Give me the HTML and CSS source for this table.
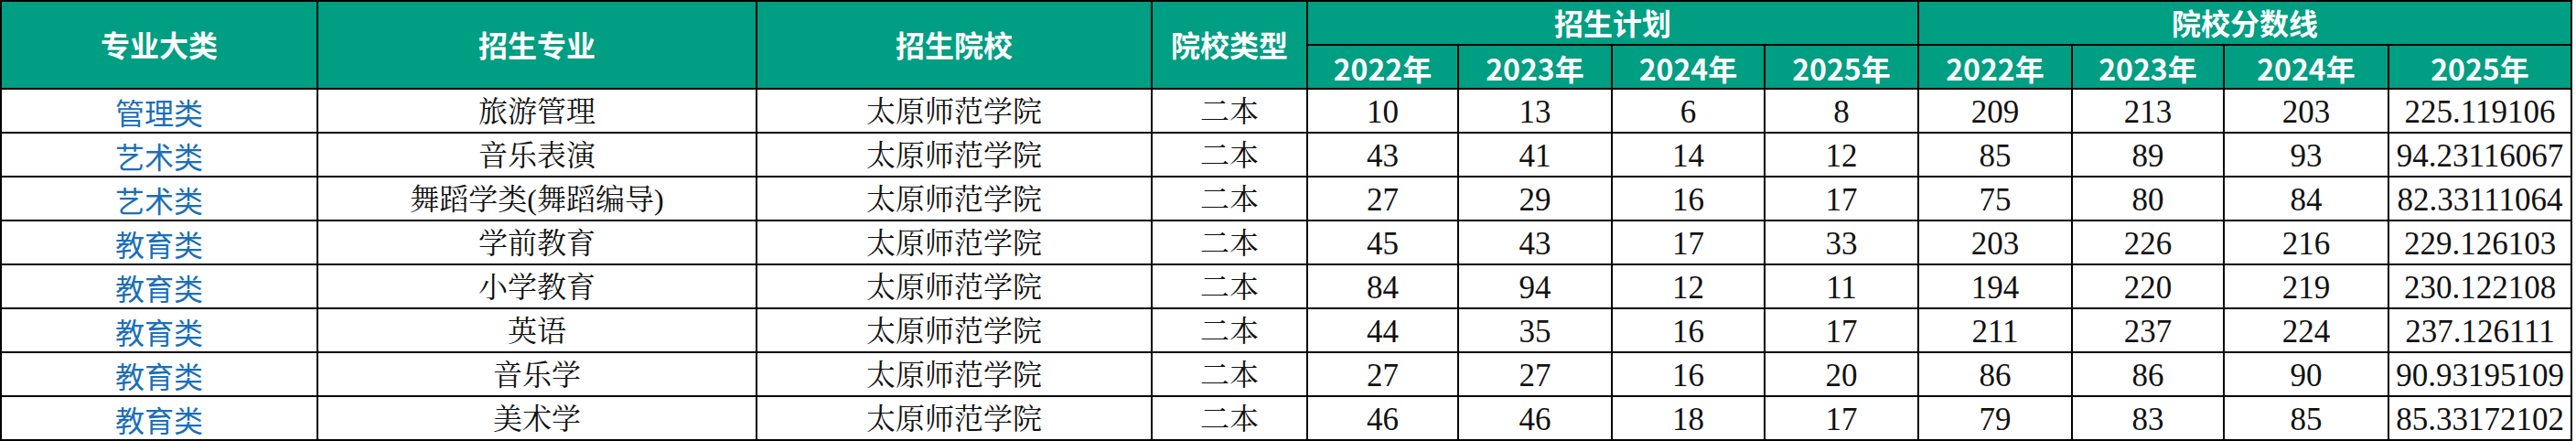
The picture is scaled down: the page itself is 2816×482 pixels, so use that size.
FILE: index.html
```html
<!DOCTYPE html>
<html lang="zh-CN">
<head>
<meta charset="utf-8">
<title>太原师范学院 招生计划与分数线</title>
<link rel="stylesheet" href="styles.css">
</head>
<body>
<div class="sheet">
  <div class="cell head tall">专业大类</div>
  <div class="cell head tall">招生专业</div>
  <div class="cell head tall">招生院校</div>
  <div class="cell head tall">院校类型</div>
  <div class="cell head group">招生计划</div>
  <div class="cell head group">院校分数线</div>
  <div class="cell head sub">2022年</div>
  <div class="cell head sub">2023年</div>
  <div class="cell head sub">2024年</div>
  <div class="cell head sub">2025年</div>
  <div class="cell head sub">2022年</div>
  <div class="cell head sub">2023年</div>
  <div class="cell head sub">2024年</div>
  <div class="cell head sub last">2025年</div>

  <div class="cell cat">管理类</div><div class="cell txt">旅游管理</div><div class="cell txt">太原师范学院</div><div class="cell txt">二本</div>
  <div class="cell num">10</div><div class="cell num">13</div><div class="cell num">6</div><div class="cell num">8</div>
  <div class="cell num">209</div><div class="cell num">213</div><div class="cell num">203</div><div class="cell num">225.119106</div>

  <div class="cell cat">艺术类</div><div class="cell txt">音乐表演</div><div class="cell txt">太原师范学院</div><div class="cell txt">二本</div>
  <div class="cell num">43</div><div class="cell num">41</div><div class="cell num">14</div><div class="cell num">12</div>
  <div class="cell num">85</div><div class="cell num">89</div><div class="cell num">93</div><div class="cell num">94.23116067</div>

  <div class="cell cat">艺术类</div><div class="cell txt">舞蹈学类(舞蹈编导)</div><div class="cell txt">太原师范学院</div><div class="cell txt">二本</div>
  <div class="cell num">27</div><div class="cell num">29</div><div class="cell num">16</div><div class="cell num">17</div>
  <div class="cell num">75</div><div class="cell num">80</div><div class="cell num">84</div><div class="cell num">82.33111064</div>

  <div class="cell cat">教育类</div><div class="cell txt">学前教育</div><div class="cell txt">太原师范学院</div><div class="cell txt">二本</div>
  <div class="cell num">45</div><div class="cell num">43</div><div class="cell num">17</div><div class="cell num">33</div>
  <div class="cell num">203</div><div class="cell num">226</div><div class="cell num">216</div><div class="cell num">229.126103</div>

  <div class="cell cat">教育类</div><div class="cell txt">小学教育</div><div class="cell txt">太原师范学院</div><div class="cell txt">二本</div>
  <div class="cell num">84</div><div class="cell num">94</div><div class="cell num">12</div><div class="cell num">11</div>
  <div class="cell num">194</div><div class="cell num">220</div><div class="cell num">219</div><div class="cell num">230.122108</div>

  <div class="cell cat">教育类</div><div class="cell txt">英语</div><div class="cell txt">太原师范学院</div><div class="cell txt">二本</div>
  <div class="cell num">44</div><div class="cell num">35</div><div class="cell num">16</div><div class="cell num">17</div>
  <div class="cell num">211</div><div class="cell num">237</div><div class="cell num">224</div><div class="cell num">237.126111</div>

  <div class="cell cat">教育类</div><div class="cell txt">音乐学</div><div class="cell txt">太原师范学院</div><div class="cell txt">二本</div>
  <div class="cell num">27</div><div class="cell num">27</div><div class="cell num">16</div><div class="cell num">20</div>
  <div class="cell num">86</div><div class="cell num">86</div><div class="cell num">90</div><div class="cell num">90.93195109</div>

  <div class="cell cat">教育类</div><div class="cell txt">美术学</div><div class="cell txt">太原师范学院</div><div class="cell txt">二本</div>
  <div class="cell num">46</div><div class="cell num">46</div><div class="cell num">18</div><div class="cell num">17</div>
  <div class="cell num">79</div><div class="cell num">83</div><div class="cell num">85</div><div class="cell num">85.33172102</div>
</div>
</body>
</html>
```

FILE: styles.css
```css
html, body {
  margin: 0;
  padding: 0;
  background: #ffffff;
}

.sheet {
  display: grid;
  grid-template-columns: 344px 478px 430px 168px 163px 166px 165px 166px 166px 164px 178px 198px;
  grid-auto-rows: 46px;
  gap: 2px;
  padding: 2px;
  width: max-content;
  background: #000000;
}

.cell {
  display: flex;
  align-items: center;
  justify-content: center;
  background: #ffffff;
  white-space: nowrap;
  line-height: 1.1;
}

.head {
  background: #009e82;
  color: #ffffff;
  font-family: "Noto Sans CJK SC", "Noto Sans", sans-serif;
  font-weight: 700;
  font-size: 32px;
}

.tall {
  grid-row: span 2;
}

.group {
  grid-column: span 4;
}

.sub {
  font-size: 32px;
  padding-top: 4px;
}

.cat {
  color: #1b6fba;
  font-family: "Noto Sans CJK SC", "Noto Sans", sans-serif;
  font-weight: 400;
  font-size: 32px;
  padding-top: 4px;
}

.txt {
  color: #111111;
  font-family: "Liberation Serif", "Noto Serif CJK SC", "Noto Sans CJK SC", serif;
  font-size: 32px;
  padding-top: 4px;
}

.num {
  color: #111111;
  font-family: "Liberation Serif", "Noto Serif CJK SC", serif;
  font-size: 35px;
  padding-top: 4px;
}
```
